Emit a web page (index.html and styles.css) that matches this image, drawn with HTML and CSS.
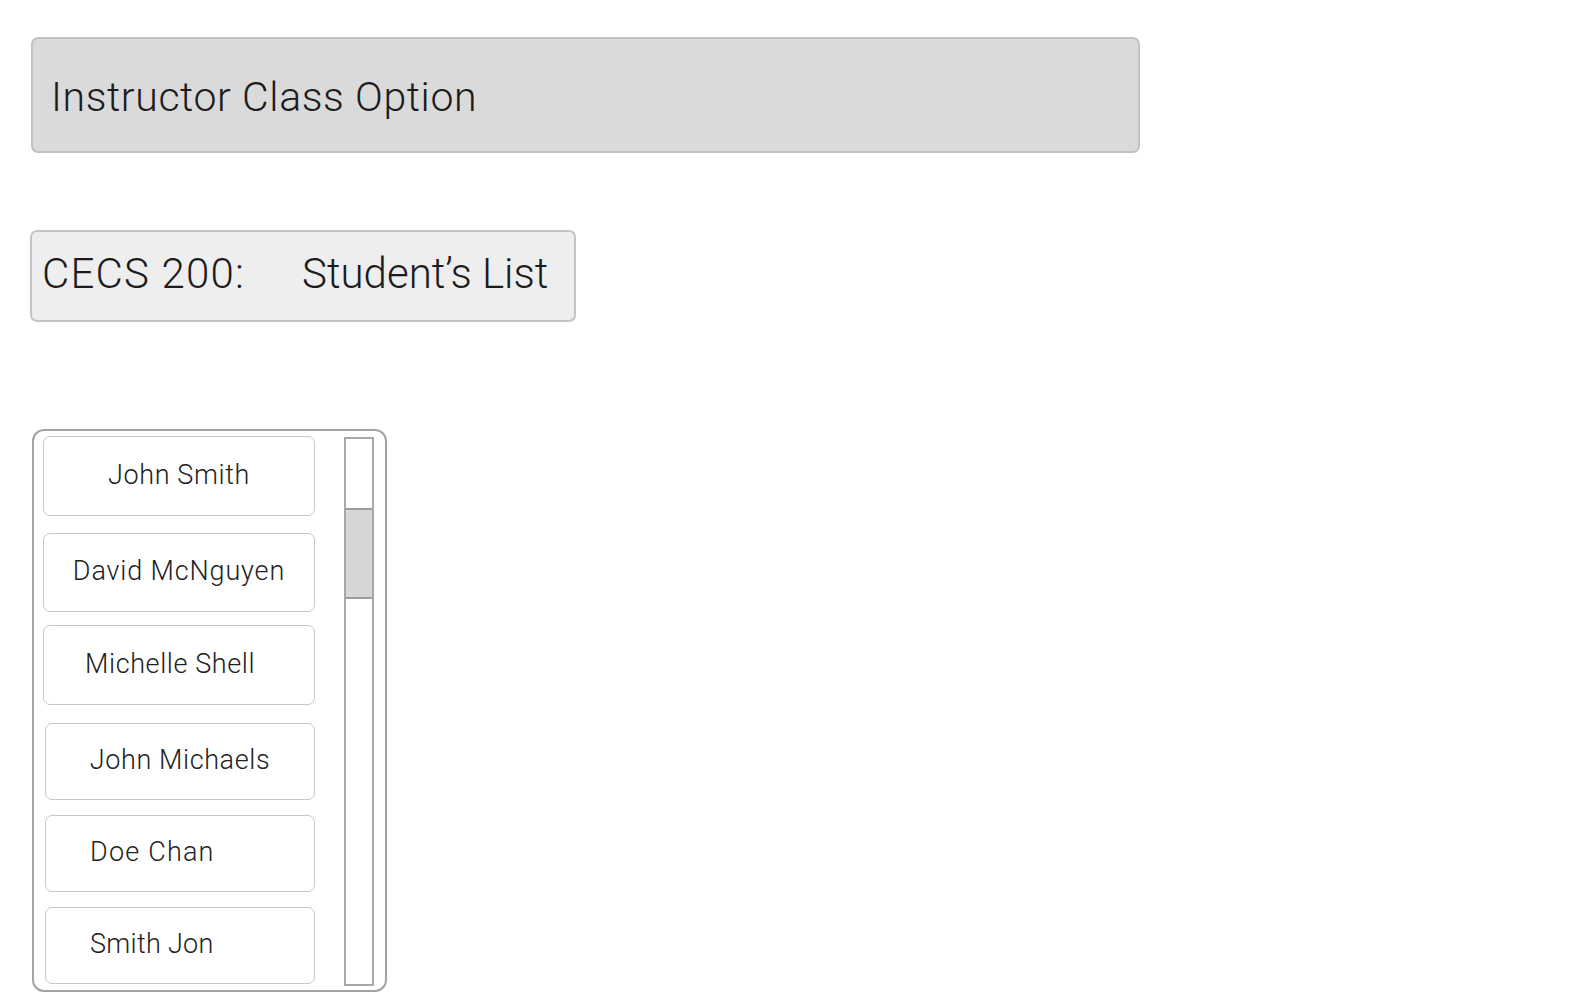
FILE: index.html
```html
<!DOCTYPE html>
<html lang="en">
<head>
<meta charset="utf-8">
<title>Instructor Class Option</title>
<link rel="stylesheet" href="styles.css">
</head>
<body>
<div class="page">
  <div class="title-bar">Instructor Class Option</div>
  <div class="class-bar"><span class="course">CECS 200:</span><span class="list-name">Student’s List</span></div>
  <div class="roster">
    <div class="students">
      <div class="student">John Smith</div>
      <div class="student">David McNguyen</div>
      <div class="student student--left">Michelle Shell</div>
      <div class="student">John Michaels</div>
      <div class="student student--left">Doe Chan</div>
      <div class="student student--left">Smith Jon</div>
    </div>
    <div class="scroll-track"><div class="scroll-thumb"></div></div>
  </div>
</div>
</body>
</html>
```

FILE: styles.css
```css
html, body {
  margin: 0;
  padding: 0;
  background: #ffffff;
}

body {
  font-family: Roboto, "Liberation Sans", Arial, sans-serif;
  font-weight: 300;
  color: #1c1c1c;
}

.page {
  padding: 37px 0 0 31px;
}

.title-bar {
  box-sizing: border-box;
  width: 1109px;
  height: 116px;
  background: #dadada;
  border: 2px solid #c2c2c2;
  border-radius: 7px;
  display: flex;
  align-items: center;
  padding: 3px 0 0 18px;
  font-size: 41px;
  letter-spacing: 0.6px;
  white-space: nowrap;
}

.class-bar {
  box-sizing: border-box;
  width: 546px;
  height: 92px;
  margin: 77px 0 0 -1px;
  background: #eeeeee;
  border: 2px solid #c4c4c4;
  border-radius: 7px;
  display: flex;
  align-items: center;
  padding: 0 0 6px 10px;
  font-size: 42px;
  white-space: nowrap;
}

.course {
  letter-spacing: 1.2px;
}

.list-name {
  margin-left: 57px;
}

.roster {
  box-sizing: border-box;
  width: 355px;
  height: 563px;
  margin: 107px 0 0 1px;
  border: 2px solid #a3a3a3;
  border-radius: 12px;
  display: flex;
  align-items: flex-start;
  padding: 5px 10px 4px 9px;
}

.students {
  width: 272px;
  display: flex;
  flex-direction: column;
}

.student {
  box-sizing: border-box;
  height: 80px;
  border: 1.5px solid #c6c6c6;
  border-radius: 7px;
  background: #ffffff;
  display: flex;
  align-items: center;
  justify-content: center;
  padding-bottom: 3px;
  font-size: 27px;
  letter-spacing: 0.6px;
  color: #222222;
  white-space: nowrap;
}

.student:nth-child(2) {
  letter-spacing: 0.85px;
}

.student--left {
  justify-content: flex-start;
  padding-left: 41px;
}

.student:nth-child(2) { margin-top: 17px; height: 79px; }
.student:nth-child(3) { margin-top: 13px; }
.student:nth-child(4) { margin-top: 18px; height: 77px; margin-left: 2px; }
.student:nth-child(5) { margin-top: 15px; height: 77px; margin-left: 2px; }
.student:nth-child(6) { margin-top: 15px; height: 77px; margin-left: 2px; }

.student:nth-child(5),
.student:nth-child(6) {
  padding-left: 44px;
}

.student:nth-child(5) {
  letter-spacing: 1.2px;
}

.student:nth-child(6) {
  letter-spacing: 0.3px;
}

.scroll-track {
  box-sizing: border-box;
  width: 30px;
  height: 549px;
  margin: 1px 0 0 29px;
  border: 2px solid #a8a8a8;
  background: #ffffff;
  display: flex;
  flex-direction: column;
}

.scroll-thumb {
  box-sizing: border-box;
  height: 91px;
  margin-top: 69px;
  background: #d6d6d6;
  border-top: 2px solid #9c9c9c;
  border-bottom: 2px solid #9c9c9c;
}
```
